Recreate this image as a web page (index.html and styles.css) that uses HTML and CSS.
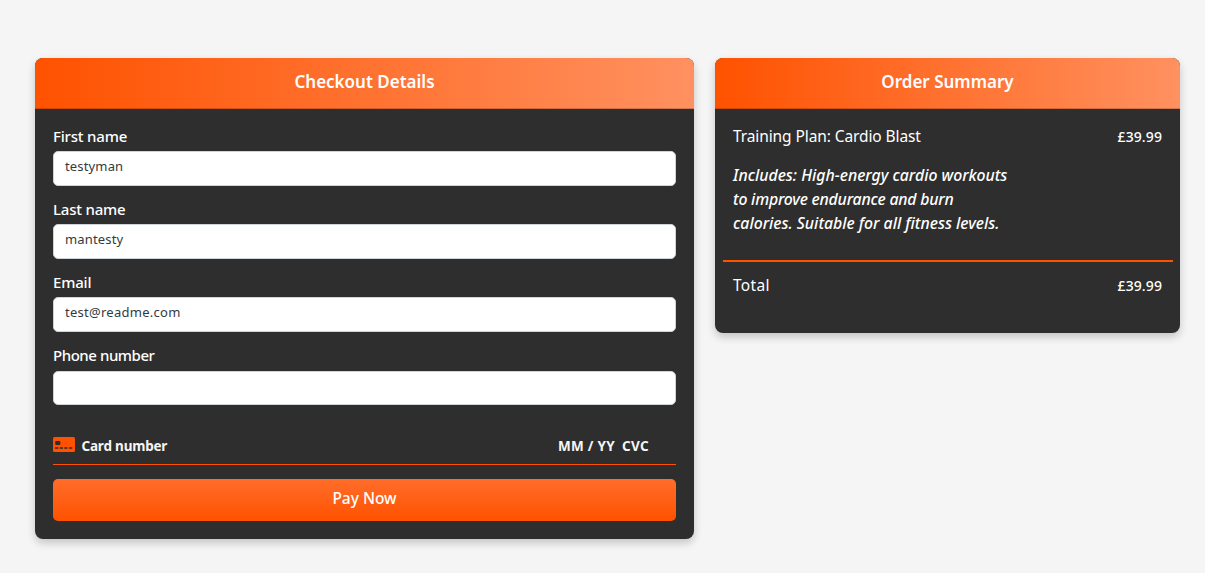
FILE: index.html
```html
<!DOCTYPE html>
<html lang="en">
<head>
<meta charset="utf-8">
<title>Checkout</title>
<link rel="stylesheet" href="styles.css">
</head>
<body>
<main class="checkout">
  <section class="card details">
    <h1 class="card-header">Checkout Details</h1>
    <form class="card-body">
      <div class="field"><label class="label" for="first">First name</label><input class="input" id="first" type="text" value="testyman"></div>
      <div class="field"><label class="label" for="last">Last name</label><input class="input" id="last" type="text" value="mantesty"></div>
      <div class="field"><label class="label" for="email">Email</label><input class="input input-email" id="email" type="email" value="test@readme.com"></div>
      <div class="field"><label class="label label-phone" for="phone">Phone number</label><input class="input input-phone" id="phone" type="text"></div>
      <div class="payment">
        <svg class="card-icon" viewBox="0 0 22 15" aria-hidden="true">
          <rect width="22" height="15" rx="1.5" fill="#ff5200"/>
          <rect x="2.2" y="4" width="5.2" height="4" rx="1" fill="#2e2e2e"/>
          <path d="M2 11h3.3M6.7 11H10M11.3 11h3.3M16 11h3.3" stroke="#2e2e2e" stroke-width="1.7"/>
        </svg>
        <span class="number">Card number</span>
        <span class="expiry">MM / YY</span>
        <span class="cvc">CVC</span>
      </div>
      <button class="pay" type="button">Pay Now</button>
    </form>
  </section>
  <section class="card summary">
    <h2 class="card-header">Order Summary</h2>
    <div class="summary-body">
      <div class="line"><span class="plan">Training Plan: Cardio Blast</span><span class="price">£39.99</span></div>
      <p class="includes">Includes: High-energy cardio workouts<br><span class="tight">to improve endurance and burn</span><br>calories. Suitable for all fitness levels.</p>
      <hr class="rule">
      <div class="line"><span class="total">Total</span><span class="price">£39.99</span></div>
    </div>
  </section>
</main>
</body>
</html>
```
FILE: styles.css
```css
* { box-sizing: border-box; }
body {
  margin: 0;
  background: #f5f5f5;
  color: #fff;
  font: 500 15px/24px "Noto Sans", sans-serif;
}
.checkout {
  display: grid;
  grid-template-columns: 659px 465px;
  column-gap: 21px;
  align-items: start;
  min-height: 573px;
  padding: 58px 25px 0 35px;
}
.card {
  background: #2e2e2e;
  border-radius: 8px;
  overflow: hidden;
  box-shadow: 0 4px 8px rgba(0, 0, 0, 0.2);
}
.details { height: 481px; }
.summary { height: 275px; }
.card-header {
  margin: 0;
  height: 51px;
  display: flex;
  align-items: center;
  justify-content: center;
  padding-bottom: 2px;
  font-size: 17px;
  font-weight: 600;
  white-space: nowrap;
  background: linear-gradient(90deg, #ff5200, #ff9160);
  border-bottom: 1px solid rgba(0, 0, 0, 0.18);
}
.card-body { padding: 15px 18px 0; }
.field { height: 73.2px; }
.label { display: block; height: 27px; letter-spacing: -0.2px; }
.label-phone { letter-spacing: -0.45px; line-height: 23px; }
.input {
  display: block;
  width: 100%;
  height: 35px;
  padding: 0 11px 5px;
  border: 1px solid #ced4da;
  border-radius: 5px;
  background: #fff;
  color: #343a40;
  font: 400 13px/24px "Noto Sans", sans-serif;
  letter-spacing: 0.15px;
}
.input-email { letter-spacing: 0.27px; }
.input-phone { height: 34px; }
.payment {
  display: flex;
  align-items: center;
  height: 37px;
  margin-top: 11px;
  border-bottom: 1px solid #ff5200;
  padding-right: 27px;
  font: 700 13.5px/20px "Noto Sans", sans-serif;
  color: #f5f5f5;
}
.card-icon { width: 22px; height: 15px; margin: 0 6.5px 3px 0; }
.number { letter-spacing: -0.2px; }
.expiry { margin-left: auto; letter-spacing: 0.3px; }
.cvc { margin-left: 7px; letter-spacing: 0.35px; }
.pay {
  display: block;
  width: 100%;
  height: 42px;
  margin-top: 14px;
  padding: 0 0 4px;
  border: 0;
  border-radius: 5px;
  background: linear-gradient(#ff6d2b, #ff5200);
  color: #fff;
  font: 500 15.5px/24px "Noto Sans", sans-serif;
}
.summary-body { padding: 15px 8px 0; white-space: nowrap; }
.line { display: flex; justify-content: space-between; padding: 0 10px; }
.plan, .total { font-size: 15.5px; font-weight: 400; }
.plan { letter-spacing: -0.1px; padding-top: 1px; line-height: 23px; }
.total { letter-spacing: 0.3px; }
.price { font-size: 14px; letter-spacing: 0.1px; padding-top: 1px; line-height: 23px; }
.includes { margin: 15px 10px 25px; font-size: 15.8px; font-style: italic; }
.tight { letter-spacing: -0.2px; }
.rule { height: 2px; margin: 0 -1px 11px 0; border: 0; background: #ff5200; }
```
